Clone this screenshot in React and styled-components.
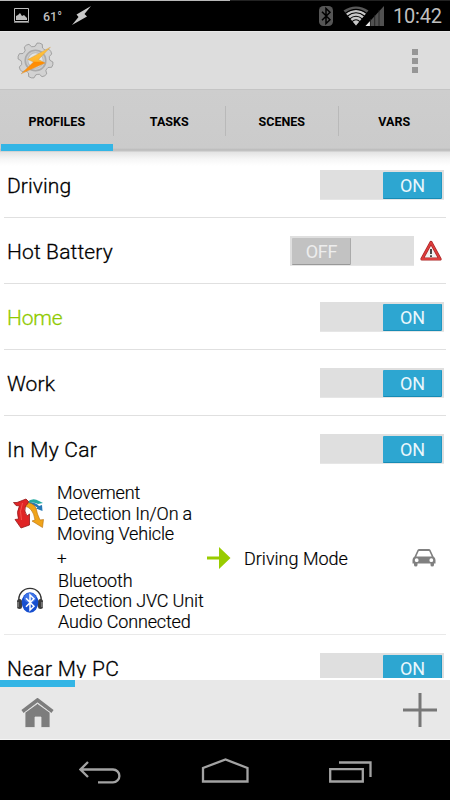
import React, { Component } from "react";
import styled, { createGlobalStyle } from "styled-components";

const GlobalStyle = createGlobalStyle`
    body {
        margin: 0;
        background: #000;
        font-family: Roboto, "Liberation Sans", sans-serif;
    }
    * {
        box-sizing: border-box;
    }
    svg {
        display: block;
        flex: none;
    }
`

let Screen = styled.div`
    width: 450px;
    height: 800px;
    display: flex;
    flex-direction: column;
    overflow: hidden;
    background: #fff;
    color: #000;
`

let StatusBar = styled.div`
    height: 31px;
    flex: none;
    display: flex;
    align-items: center;
    padding: 0 8px 0 13px;
    background: linear-gradient(90deg, #b9b9b9 230px, #222 230px) no-repeat 0 0 / 100% 1px, #000;
    color: #bfbfbf;
`

let Temperature = styled.span`
    margin: 1px 9px 0 13px;
    width: 20px;
    font-size: 12.5px;
    font-weight: 500;
    white-space: nowrap;
`

let Clock = styled.span`
    margin-left: 8px;
    width: 49px;
    font-size: 20px;
    line-height: 31px;
    padding-top: 2px;
    letter-spacing: -0.2px;
`

let Spacer = styled.div`
    flex: 1;
`

let Header = styled.div`
    height: 58px;
    flex: none;
    display: flex;
    justify-content: space-between;
    align-items: center;
    padding: 0 31px 0 17px;
    background: #ddd;
    border-top: 1px solid #e8e8e8;
`

let Tabs = styled.div`
    height: 63px;
    flex: none;
    display: flex;
    background: linear-gradient(#c4c4c4 1px, #cecece 1px, #cbcbcb 59px, #bababa 61px, #c8c8c8 62px, #dedede 63px);
`

let Tab = styled.div`
    flex: 1;
    display: flex;
    justify-content: center;
    align-items: center;
    padding: 2px 0 0 1px;
    font-size: 12.5px;
    font-weight: 700;
    background: ${props => props.$active
        ? "linear-gradient(#33b5e5, #33b5e5) no-repeat 1px 55px / 112px 7px"
        : "linear-gradient(#b9b9b9, #b9b9b9) no-repeat 0 17px / 1px 30px"};
`

let List = styled.div`
    height: 526px;
    flex: none;
    overflow: hidden;
    background: linear-gradient(#e3e3e3, #f6f6f6 7px, #fff 14px);
`

let Row = styled.div`
    height: 66px;
    display: flex;
    align-items: center;
    justify-content: space-between;
    margin-left: 4px;
    margin-right: 4px;
    padding: 1px 2px 0 3px;
    border-bottom: 1px solid ${props => props.$open ? "transparent" : "#e0e0e0"};
    color: ${props => props.$active ? "#8fca00" : "#000"};
`

let Name = styled.span`
    font-size: 21px;
    font-weight: 300;
    -webkit-text-stroke: 0.3px currentColor;
    letter-spacing: ${props => props.$spacing || 0.1}px;
    padding-top: 1px;
    white-space: nowrap;
`

let Controls = styled.div`
    display: flex;
    align-items: center;
    gap: 6px;
`

let Switch = styled.div`
    width: 124px;
    height: 30px;
    display: flex;
    justify-content: ${props => props.$on ? "flex-end" : "flex-start"};
    padding: 2px 2px 1px 2px;
    background: #dfdfdf;
    border-bottom: 1px solid #e6e6e6;
`

let Thumb = styled.div`
    width: 59px;
    height: 27px;
    border-radius: 1px;
    text-align: center;
    font-size: 18px;
    line-height: 27px;
    letter-spacing: -0.2px;
    padding-left: 1px;
    color: ${props => props.$on ? "#eaf7fc" : "#ededed"};
    background: ${props => props.$on ? "#2da6d1" : "#c2c2c2"};
    border-bottom: 1px solid ${props => props.$on ? "#168bb5" : "#989898"};
    border-right: 1px solid ${props => props.$on ? "#1e97c2" : "#aaa"};
`

let Details = styled.div`
    height: 153px;
    display: flex;
    margin: 0 4px;
    padding: 0 10px 0 9px;
    border-bottom: 1px solid #e9e9e9;
`

let Contexts = styled.div`
    width: 194px;
    padding-top: 1px;
`

let Context = styled.div`
    display: flex;
    align-items: center;
    gap: ${props => props.$gap}px;
    padding-left: ${props => props.$indent || 0}px;
    font-size: 18px;
    font-weight: 300;
    -webkit-text-stroke: 0.2px currentColor;
    letter-spacing: -0.15px;
    line-height: 20.5px;
    white-space: nowrap;
`

let Plus = styled.div`
    padding-left: 44px;
    font-size: 17px;
    font-weight: 300;
    -webkit-text-stroke: 0.2px currentColor;
    line-height: 26px;
    height: 26px;
`

let Task = styled.div`
    flex: 1;
    height: 152px;
    display: flex;
    align-items: center;
    font-size: 18px;
    font-weight: 300;

    span {
        flex: 1;
        margin-left: 13px;
        -webkit-text-stroke: 0.2px currentColor;
    }
`

let ProjectBar = styled.div`
    height: 62px;
    flex: none;
    display: flex;
    justify-content: space-between;
    align-items: flex-start;
    padding: 13px 13px 0 21px;
    border-top: 2px solid #fff;
    border-bottom: 1px solid #f5f5f5;
    background: linear-gradient(#33b5e5, #33b5e5) no-repeat 0 0 / 75px 7px, #e8e8e8;
`

let HomeButton = styled.div`
    padding-top: 5px;
`

let NavBar = styled.div`
    flex: 1;
    display: flex;
    justify-content: space-between;
    padding: 18px 77px 0 79px;
    background: #000;
`

const BLUETOOTH = "M-4 -4.5 L4 4 L0 8 V-8 L4 -4 L-4 4.5";
const BOLT = "M19 0 L4.5 8.5 L6.5 11 L0 19 L15 10.5 L12.5 8 Z";

const PictureIcon = () => (
    <svg width="17" height="17" viewBox="0 0 17 17">
        <path d="M1.5 1.5h14v13h-14z" fill="none" stroke="#bdbdbd" />
        <path d="M1 15.5h15" stroke="#777" />
        <path d="M3 13V9l2-1 2-2 2 3 2-1 3 3v2z" fill="#bdbdbd" />
    </svg>
);

const SignalIcons = () => (
    <svg width="66" height="22" viewBox="319 4 66 22">
        <rect x="319" y="5" width="14" height="20" rx="4.5" fill="#555" />
        <path d={BLUETOOTH} transform="translate(326 15) scale(1 .95)" fill="none" stroke="#000" strokeWidth="1.5" />
        <path d="M343.5 9.5Q356 1.5 368.5 9.5L356 24.5z" fill="#585858" />
        <path d="M346 12.4Q356 5.6 366 12.4L356 24.5z" fill="#c8c8c8" />
        <g fill="none" stroke="#000" strokeWidth="1.1">
            <path d="M345.5 12.3Q356 4.5 366.5 12.3" />
            <path d="M347.5 15Q356 8.4 364.5 15" />
            <path d="M349.7 17.8Q356 12.6 362.3 17.8" />
            <path d="M352 20.6Q356 17 360 20.6" />
        </g>
        <path d="M365.5 25L384 5v20z" fill="#515151" />
        <path d="M365.5 25L370 20.2V25z" fill="#eee" />
        <path d="M370.4 18v7M374.7 14v11M379 9v16" stroke="#1d1d1d" strokeWidth=".8" />
    </svg>
);

// cog outline: eight flat teeth around the centre
const teeth = [...Array(8)].map((_, i) => {
    const point = (deg, r) => {
        const a = (deg + i * 45) * Math.PI / 180;
        return `${(18 + r * Math.cos(a)).toFixed(2)} ${(18 + r * Math.sin(a)).toFixed(2)}`;
    };
    return `${i ? "L" : "M"}${point(-7, 13.7)} L${point(-1, 14)} L${point(5, 17)} Q${point(14, 18)} ${point(23, 17)} L${point(29, 14)} L${point(35, 13.7)}`;
}).join(" ") + "Z";

const Logo = () => (
    <svg width="37" height="37" viewBox="0 0 36 36">
        <defs>
            <linearGradient id="bolt" x1="0" y1="0" x2="0" y2="1">
                <stop offset="0" stopColor="#ffc642" />
                <stop offset=".53" stopColor="#ffb42c" />
                <stop offset=".56" stopColor="#ff8b00" />
                <stop offset="1" stopColor="#ff9618" />
            </linearGradient>
        </defs>
        <path d={teeth} fill="#d2d2d2" stroke="#8c8c8c" strokeWidth=".7" />
        <circle cx="18" cy="18" r="10" fill="#ccc" stroke="#aaa" strokeWidth="1.6" />
        <circle cx="18" cy="18" r="7.5" fill="#e0e4e5" stroke="#bbb" />
        <path d="M32.500 5 L10.500 17 L16 19.500 L4 31 L27.500 20.500 L21 17 Z" fill="url(#bolt)" stroke="#c99b58" strokeWidth=".4" />
    </svg>
);

const Warning = () => (
    <svg width="24" height="24" viewBox="0 0 24 24">
        <path d="M11 3.500L20 20H2z" fill="#f1f1f1" stroke="#a92525" strokeWidth="3.200" strokeLinejoin="round" />
        <path d="M11 3.500L20 20H2z" fill="none" stroke="#dc3c3c" strokeWidth="1.800" strokeLinejoin="round" />
        <path d="M11 10v5M11 16.200v1.700" stroke="#111" strokeWidth="1.500" />
    </svg>
);

const MovementIcon = () => (
    <svg width="31" height="32" viewBox="0 0 31 32">
        <path d="M14 4Q20 -1 26 3L30 5 25 6Q20 3 14 6z" fill="#25aaa1" />
        <path d="M14 5Q22 3 26 8L29 7 29.500 13 23 10.500 24.500 9.500Q20 6 13 7z" fill="#2678b6" />
        <path d="M11 4.500Q20 4 23 10Q24 16 27 22L30.500 21.500 29.500 29.500 19 23 22 22Q20 9 11 8z" fill="#f0a41a" stroke="#b66c0c" strokeWidth=".6" />
        <path d="M.5 4.500L4 4.500 13 1 15.500 3.500Q15 6 12.500 8Q10.500 13 14 18L16.500 16 16.500 27 8 30 2 21.500 5.500 21Q3 14 6.500 8L3 7.500z" fill="#e02425" stroke="#96191a" strokeWidth=".8" strokeLinejoin="round" />
        <path d="M9.500 5Q6 13 8.500 22" fill="none" stroke="#f8574f" strokeWidth=".9" />
    </svg>
);

const HeadsetIcon = () => (
    <svg width="28" height="28" viewBox="0 0 28 28">
        <path d="M3 16C0-3.5 28-3.5 25 16" fill="none" stroke="#333" strokeWidth="1.4" />
        <rect x="1" y="12" width="5" height="10" rx="2.500" fill="#3d3d3d" />
        <rect x="22" y="12" width="5" height="10" rx="2.500" fill="#3d3d3d" />
        <path d="M2 15v5M26 15v5" stroke="#aaa" />
        <ellipse cx="14" cy="15.5" rx="8.3" ry="10.3" fill="#174fcf" />
        <ellipse cx="14" cy="11" rx="6" ry="5" fill="#3f74e6" />
        <path d={BLUETOOTH} transform="translate(14 15.5) scale(1 .95)" fill="none" stroke="#fff" strokeWidth="1.5" />
    </svg>
);

const CarIcon = () => (
    <svg width="24" height="19" viewBox="0 0 24 19">
        <path fillRule="evenodd" fill="#808080" d="M5.5 1Q6 0 7.2 0H16.8Q18 0 18.5 1L21.5 7.5Q23.5 8.5 23.5 11V14.5H22V16Q22 17.5 20.2 17.5T18.5 16V14.5H5.5V16Q5.500 17.500 3.800 17.500T2 16V14.500H.5V11Q.5 8.500 2.500 7.500ZM6.800 2L4.300 7.500H19.700L17.200 2ZM4.700 9.300A1.900 1.900 0 1 0 4.700 13.100A1.900 1.900 0 1 0 4.700 9.300M19.300 9.300A1.900 1.900 0 1 0 19.300 13.100A1.900 1.900 0 1 0 19.300 9.300Z" />
    </svg>
);

const Toggle = ({ on }) => (
    <Switch $on={on}>
        <Thumb $on={on}>{on ? "ON" : "OFF"}</Thumb>
    </Switch>
);

const profiles = [
    { name: "Driving", on: true },
    { name: "Hot Battery", on: false, warning: true, spacing: 0.15 },
    { name: "Home", on: true, active: true, spacing: -0.2 },
    { name: "Work", on: true },
    { name: "In My Car", on: true, open: true, spacing: 0.3 },
    { name: "Near My PC", on: true, spacing: 0.3 },
];

class App extends Component {
    renderDetails() {
        return (
            <Details>
                <Contexts>
                    <Context $gap={13}>
                        <MovementIcon />
                        <div>
                            <div>Movement</div>
                            <div>Detection In/On a</div>
                            <div>Moving Vehicle</div>
                        </div>
                    </Context>
                    <Plus>+</Plus>
                    <Context $gap={14} $indent={3}>
                        <HeadsetIcon />
                        <div>
                            <div>Bluetooth</div>
                            <div>Detection JVC Unit</div>
                            <div>Audio Connected</div>
                        </div>
                    </Context>
                </Contexts>
                <Task>
                    <svg width="24" height="22" viewBox="0 0 24 22">
                        <path d="M0 9.500H12V0L23.500 11 12 22V12.500H0z" fill="#99cc00" />
                    </svg>
                    <span>Driving Mode</span>
                    <CarIcon />
                </Task>
            </Details>
        )
    }

    render() {
        return (
            <Screen>
                <GlobalStyle />
                <StatusBar>
                    <PictureIcon />
                    <Temperature>61°</Temperature>
                    <svg width="20" height="20" viewBox="0 0 20 20">
                        <path d={BOLT} fill="#c9c9c9" />
                    </svg>
                    <Spacer />
                    <SignalIcons />
                    <Clock>10:42</Clock>
                </StatusBar>
                <Header>
                    <Logo />
                    <svg width="8" height="26" viewBox="0 0 8 26">
                        <path d="M1 1h6v6H1zM1 10h6v6H1zM1 19h6v6H1z" fill="#969696" />
                    </svg>
                </Header>
                <Tabs>
                    <Tab $active>PROFILES</Tab>
                    <Tab>TASKS</Tab>
                    <Tab>SCENES</Tab>
                    <Tab>VARS</Tab>
                </Tabs>
                <List>
                    {profiles.map(p => (
                        <React.Fragment key={p.name}>
                            <Row $active={p.active} $open={p.open}>
                                <Name $spacing={p.spacing}>{p.name}</Name>
                                <Controls>
                                    <Toggle on={p.on} />
                                    {p.warning && <Warning />}
                                </Controls>
                            </Row>
                            {p.open && this.renderDetails()}
                        </React.Fragment>
                    ))}
                </List>
                <ProjectBar>
                    <HomeButton>
                        <svg width="33" height="30" viewBox="0 0 33 30">
                            <path d="M1.500 13.500L16.500 2 31.500 13.500" fill="none" stroke="#7d7d7d" strokeWidth="3.600" />
                            <path d="M4 14.500L16.500 5.500 29 14.500V29.500H20V19H14V29.500H4z" fill="#7d7d7d" stroke="#e8e8e8" strokeWidth=".8" />
                        </svg>
                    </HomeButton>
                    <svg width="34" height="34" viewBox="0 0 34 34">
                        <path d="M0 17h34M17 0v34" stroke="#777" strokeWidth="3" />
                    </svg>
                </ProjectBar>
                <NavBar>
                    <svg width="42" height="26" viewBox="0 0 42 26" fill="none" stroke="#a3a3a3" strokeWidth="2.300">
                        <path d="M9 4L1.500 11.500 9 19M2 11.500H34A6.400 6.400 0 0 1 34 24.300H19" />
                    </svg>
                    <svg width="48" height="26" viewBox="0 0 48 26" fill="none" stroke="#a3a3a3" strokeWidth="2.300">
                        <path d="M2 23.500V10L24.500 1.500 46.500 10V23.500z" />
                    </svg>
                    <svg width="44" height="26" viewBox="0 0 44 26" fill="none" stroke="#a3a3a3" strokeWidth="2.300">
                        <path d="M1.200 11.200H33.800V23.500H1.200zM10 4.500H41.500V19" />
                    </svg>
                </NavBar>
            </Screen>
        );
    }
}

export default App;
